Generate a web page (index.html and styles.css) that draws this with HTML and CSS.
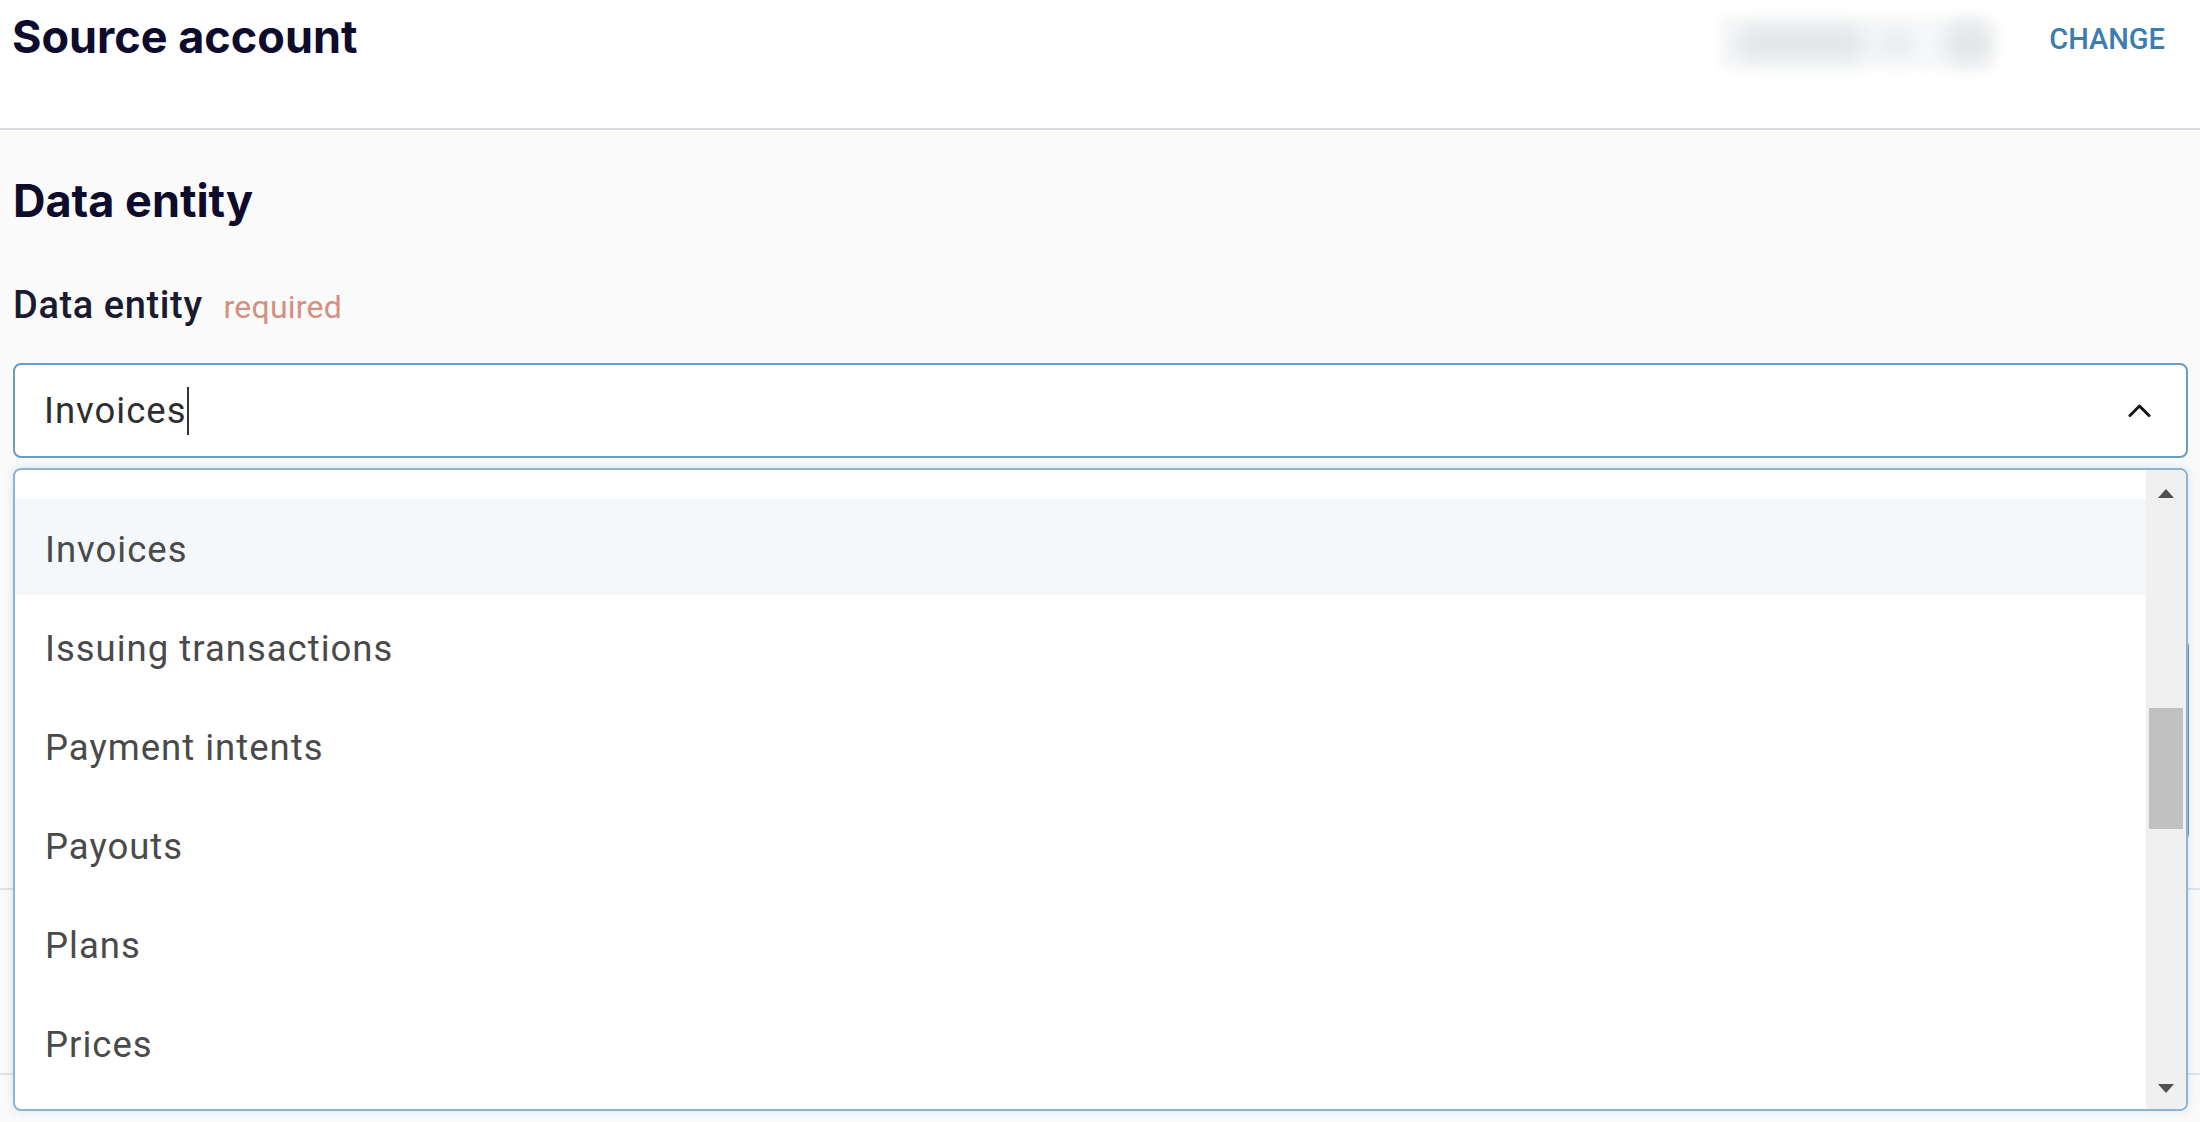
FILE: index.html
```html
<!DOCTYPE html>
<html lang="en">
<head>
<meta charset="utf-8">
<title>Data entity</title>
<link rel="stylesheet" href="styles.css">
</head>
<body>
<div class="page">
  <header class="top">
    <h1 class="heading heading-main">Source account</h1>
    <div class="account-blur" aria-hidden="true">
      <span class="blob blob-a"></span>
      <span class="blob blob-b"></span>
      <span class="blob blob-c"></span>
    </div>
    <button class="change">CHANGE</button>
  </header>

  <main class="section">
    <h2 class="heading">Data entity</h2>

    <div class="field">
      <div class="label">Data entity<span class="req">required</span></div>

      <div class="combo">
        <div class="input">
          <span class="value">Invoices</span><span class="caret"></span>
          <svg class="chev" viewBox="0 0 23 13" width="23" height="13" aria-hidden="true">
            <polyline points="2,11.5 11.5,2 21,11.5" fill="none" stroke="#141414" stroke-width="3" stroke-linecap="round" stroke-linejoin="round"/>
          </svg>
        </div>

        <div class="dropdown">
          <ul class="list">
            <li class="opt active">Invoices</li>
            <li class="opt">Issuing transactions</li>
            <li class="opt">Payment intents</li>
            <li class="opt">Payouts</li>
            <li class="opt">Plans</li>
            <li class="opt">Prices</li>
          </ul>
          <div class="scrollbar">
            <span class="arrow arrow-up"></span>
            <span class="thumb" style="margin-top:210px;height:121px"></span>
            <span class="arrow arrow-down"></span>
          </div>
        </div>
      </div>

      <div class="under">
        <div class="under-box"></div>
        <div class="rule rule-1"></div>
        <div class="rule rule-2"></div>
      </div>
    </div>
  </main>
</div>
</body>
</html>
```

FILE: styles.css
```css
html, body {
  margin: 0;
  padding: 0;
  height: 1122px;
  overflow: hidden;
  background: #fafafa;
  font-family: Roboto, "Liberation Sans", sans-serif;
}

.page {
  width: 2200px;
  height: 1122px;
  overflow: hidden;
}

/* ---------- header ---------- */
.top {
  box-sizing: border-box;
  height: 130px;
  background: #ffffff;
  border-bottom: 2px solid #d7dbe0;
  display: flex;
  align-items: flex-start;
  padding: 10px 35px 0 12px;
}

.heading {
  margin: 0;
  font-family: Inter, "Liberation Sans", sans-serif;
  font-weight: 700;
  font-size: 45px;
  line-height: 54px;
  color: #0e0c2c;
  letter-spacing: 0;
}

.heading-main {
  flex: 1;
  font-size: 45px;
}

.account-blur {
  width: 274px;
  height: 54px;
  margin-top: 6px;
  background: #f7f8f9;
  display: flex;
  align-items: center;
  filter: blur(5px);
}

.blob {
  display: block;
  background: #e4e7e9;
  filter: blur(8px);
}

.blob-a {
  width: 136px;
  height: 36px;
  border-radius: 18px;
  margin-left: 14px;
}

.blob-b {
  width: 36px;
  height: 26px;
  border-radius: 13px;
  margin-left: 12px;
  background: #e9ebed;
}

.blob-c {
  width: 54px;
  height: 46px;
  border-radius: 50%;
  margin-left: 28px;
}

.change {
  margin-left: 55px;
  margin-top: 11px;
  padding: 0;
  border: 0;
  background: none;
  font-family: Roboto, "Liberation Sans", sans-serif;
  font-weight: 500;
  font-size: 29px;
  line-height: 36px;
  letter-spacing: 0;
  color: #3a7db1;
}

/* ---------- section ---------- */
.section {
  padding: 44px 12px 0 13px;
}

.label {
  margin-top: 55px;
  font-weight: 500;
  font-size: 38px;
  line-height: 44px;
  letter-spacing: 0.6px;
  color: #1a1a30;
}

.req {
  margin-left: 21px;
  font-weight: 400;
  font-size: 32px;
  letter-spacing: 0.2px;
  color: #d4907f;
}

.combo {
  position: relative;
  margin-top: 34px;
}

.input {
  box-sizing: border-box;
  height: 95px;
  border: 2px solid #6b9cc2;
  border-radius: 8px;
  background: #ffffff;
  display: flex;
  align-items: center;
  padding: 0 35px 0 29px;
  font-size: 36.5px;
  letter-spacing: 1px;
  color: #2e2e2e;
}

.caret {
  display: inline-block;
  width: 2px;
  height: 48px;
  background: #333333;
}

.chev {
  margin-left: auto;
  display: block;
}

/* ---------- dropdown ---------- */
.dropdown {
  position: absolute;
  z-index: 5;
  top: calc(100% + 10px);
  left: 0;
  right: 0;
  box-sizing: border-box;
  height: 643px;
  border: 2px solid #8fb4d0;
  border-radius: 8px;
  background: #ffffff;
  box-shadow: 0 0 8px 1px rgba(100, 150, 200, 0.18);
  display: flex;
  overflow: hidden;
}

.list {
  flex: 1;
  margin: 0;
  padding: 29px 0 0 0;
  list-style: none;
  overflow: hidden;
}

.opt {
  box-sizing: border-box;
  height: 99px;
  line-height: 95px;
  padding: 3px 0 0 30px;
  font-size: 36.5px;
  letter-spacing: 1px;
  color: #4a4a4a;
  white-space: nowrap;
}

.opt.active {
  background: #f4f8fb;
  height: 96px;
  margin-bottom: 3px;
}

.scrollbar {
  width: 40px;
  background: #f0f0f0;
  display: flex;
  flex-direction: column;
  align-items: center;
}

.arrow {
  display: block;
  width: 0;
  height: 0;
  border-left: 8.5px solid transparent;
  border-right: 8.5px solid transparent;
}

.arrow-up {
  margin-top: 19px;
  border-bottom: 9px solid #505050;
}

.arrow-down {
  margin-top: auto;
  margin-bottom: 16px;
  border-top: 9px solid #505050;
}

.thumb {
  display: block;
  width: 34px;
  background: #c1c1c1;
}

/* ---------- content beneath the open dropdown ---------- */
.under {
  margin-top: 181px;
}

.under-box {
  height: 203px;
  box-sizing: border-box;
  border: 2px solid #5e91ba;
  border-radius: 8px;
  margin-right: -1px;
  background: #ffffff;
}

.rule {
  border-top: 2px solid #dde2e7;
  margin-left: -13px;
  margin-right: -12px;
}

.rule-1 {
  margin-top: 46px;
}

.rule-2 {
  margin-top: 183px;
}
```
